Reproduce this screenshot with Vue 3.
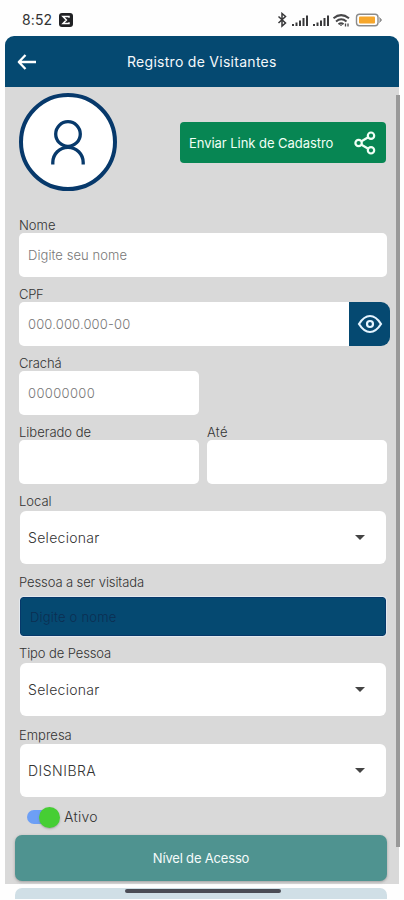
<script setup>
import { ref } from 'vue'

const active = ref(true)
</script>

<template>
  <div class="screen">
    <div class="status">
      <span class="time">8:52</span>
      <svg class="app-badge" width="14" height="14" viewBox="0 0 14 14">
        <rect width="14" height="14" rx="3" fill="#202124" />
        <path d="M10 4.8V3.5H4l3.4 3.4L4 10.5h6V9.2" fill="none" stroke="#fff" stroke-width="1.5" />
      </svg>
      <svg class="status-icons" width="108" height="16" viewBox="0 0 108 16">
        <path d="M1.500 4.500l7 6.500L5 14V1.500L8.500 4.500l-7 6.500" fill="none" stroke="#38383a" stroke-width="1.500" />
        <g stroke="#38383a" stroke-width="2">
          <path d="M16 14v-2M19.500 14v-3.500M23 14V8.500M26.500 14V6M30 14V3.500" />
          <path d="M37 14v-2M40.500 14v-3.500M44 14V8.500M47.500 14V6M51 14V3.500" />
        </g>
        <g fill="none" stroke="#48484a" stroke-width="2">
          <path d="M56.500 6.200q7.500-6.200 15.500 0M59 9.400q5.200-4.400 10.500 0M61.500 12.200q2.700-2 5 0" />
          <path d="M64 12.500v1.500M68.500 11.500v3M71 11.500v3" stroke-width="1.300" />
        </g>
        <rect x="79.500" y="2.300" width="21.500" height="11.400" rx="3" fill="#fff" stroke="#8b8b8b" stroke-width="1.400" />
        <rect x="82" y="4.500" width="16" height="7" rx="1" fill="#f6a62b" />
        <path d="M102.500 5.500l2 2.500-2 2.500" fill="#8b8b8b" stroke="#8b8b8b" />
      </svg>
    </div>

    <header class="header">
      <svg class="back" width="20" height="18" viewBox="0 0 20 18">
        <path d="M8.500 2L1.800 9l6.700 7M2 9h17" fill="none" stroke="#fff" stroke-width="2.300" stroke-linejoin="round" />
      </svg>
      <h1>Registro de Visitantes</h1>
    </header>

    <main class="content">
      <div class="top">
        <div class="avatar">
          <svg width="36" height="50" viewBox="0 0 36 50" fill="none" stroke="#07396b" stroke-width="3.300">
            <circle cx="18" cy="17" r="12.300" />
            <path d="M2.800 47.500v-2a15.200 15.200 0 0 1 30.400 0v2" />
          </svg>
        </div>
        <button class="share">
          <span>Enviar Link de Cadastro</span>
          <svg width="24" height="24" viewBox="0 0 24 24" fill="none" stroke="#f0fff5" stroke-width="2.200">
            <path d="M8.500 10.300l6.300-3.800M8.500 13.700l6.300 3.800" />
            <circle cx="5.600" cy="12" r="3.200" />
            <circle cx="18" cy="4.700" r="3.200" />
            <circle cx="18" cy="19.300" r="3.200" />
          </svg>
        </button>
      </div>

      <div class="field">
        <label>Nome</label>
        <div class="input"><span class="p-name">Digite seu nome</span></div>
      </div>
      <div class="field">
        <label class="l-cpf">CPF</label>
        <div class="cpf-row">
          <div class="input"><span class="p-cpf">000.000.000-00</span></div>
          <button class="eye">
            <svg width="26" height="20" viewBox="0 0 26 20" fill="none" stroke="#e4f4ff" stroke-width="2.200">
              <path d="M2 10Q7 2 13 2t11 8q-5 8-11 8T2 10z" />
              <circle cx="13" cy="10" r="3" />
            </svg>
          </button>
        </div>
      </div>
      <div class="field half">
        <label class="l-badge">Crachá</label>
        <div class="input"><span class="p-badge">00000000</span></div>
      </div>
      <div class="dates">
        <div class="field">
          <label>Liberado de</label>
          <div class="input"></div>
        </div>
        <div class="field">
          <label class="l-until">Até</label>
          <div class="input"></div>
        </div>
      </div>
      <div class="field local">
        <label>Local</label>
        <div class="select"><span>Selecionar</span><i class="caret"></i></div>
      </div>
      <div class="field visited">
        <label>Pessoa a ser visitada</label>
        <div class="search"><span>Digite o nome</span></div>
      </div>
      <div class="field kind">
        <label>Tipo de Pessoa</label>
        <div class="select"><span>Selecionar</span><i class="caret"></i></div>
      </div>
      <div class="field company">
        <label>Empresa</label>
        <div class="select"><span>DISNIBRA</span><i class="caret"></i></div>
      </div>
      <div class="toggle-row" @click="active = !active">
        <span class="toggle" :class="{ on: active }"><i></i></span>
        <span class="toggle-label">Ativo</span>
      </div>
      <button class="access"><span>Nível de Acesso</span></button>
      <div class="scrollbar"></div>
    </main>

    <footer class="bottom">
      <div class="peek"><div class="gesture"></div></div>
    </footer>
  </div>
</template>

<style>
body {
  margin: 0;
  background: #fefefe;
}
</style>

<style scoped>
* {
  box-sizing: border-box;
}
.screen {
  width: 404px;
  height: 900px;
  overflow: hidden;
  display: flex;
  flex-direction: column;
  background: #fefefe;
  font-family: Inter, "Noto Sans", sans-serif;
  font-weight: 300;
  color: #333;
  white-space: nowrap;
}
button {
  border: 0;
  padding: 0;
  font: inherit;
}
.status {
  height: 36px;
  flex: none;
  display: flex;
  align-items: center;
  padding: 3px 19px 0 22px;
}
.time {
  width: 37px;
  font-size: 14px;
  font-weight: 400;
  letter-spacing: 0.1px;
}
.status-icons {
  margin-left: auto;
  margin-right: 0;
}
.header {
  height: 51px;
  flex: none;
  margin: 0 5px;
  padding: 0 12px;
  display: flex;
  align-items: center;
  background: #054971;
  border-radius: 9px 9px 0 0;
}
h1 {
  margin: 0 0 0 90px;
  font-size: 14px;
  font-weight: 400;
  letter-spacing: 0.28px;
  color: #f4f8fb;
}
.content {
  position: relative;
  height: 797px;
  flex: none;
  margin: 0 5px;
  padding: 6px 13px 0 14px;
  background: #d9d9d9;
}
.top {
  height: 124px;
  width: 367px;
  display: flex;
  justify-content: space-between;
}
.avatar {
  width: 98px;
  height: 98px;
  border: 4px solid #07396b;
  border-radius: 50%;
  background: #fff;
  display: flex;
  justify-content: center;
  padding-top: 20px;
}
.share {
  width: 206px;
  height: 41px;
  margin: 29px 0 0;
  padding: 0 9px;
  display: flex;
  align-items: center;
  justify-content: space-between;
  border-radius: 4px;
  background: #078653;
  color: #f0fff5;
  font-size: 13px;
  font-weight: 400;
  letter-spacing: -0.05px;
}
.field {
  width: 368px;
  height: 69px;
}
.field label {
  display: block;
  height: 16px;
  line-height: 16px;
  font-size: 13px;
}
.field .l-cpf {
  letter-spacing: -0.3px;
}
.field .l-badge {
  letter-spacing: -0.15px;
}
.field .l-until {
  letter-spacing: 0.3px;
}
.input {
  height: 44px;
  border-radius: 5px;
  background: #fff;
  padding-left: 9px;
  display: flex;
  align-items: center;
  font-size: 13px;
  color: #777;
}
.p-name {
  letter-spacing: 0.07px;
}
.p-cpf {
  letter-spacing: 0.15px;
}
.p-badge {
  letter-spacing: 0.35px;
}
.half {
  width: 180px;
}
.cpf-row {
  width: 371px;
  display: flex;
}
.cpf-row .input {
  flex: 1;
  border-radius: 5px 0 0 5px;
}
.eye {
  width: 41px;
  height: 44px;
  background: #054971;
  border-radius: 0 9px 9px 0;
  display: flex;
  align-items: center;
  justify-content: center;
}
.dates {
  width: 368px;
  display: grid;
  grid-template-columns: 180px 180px;
  gap: 8px;
}
.dates .field {
  width: 180px;
}
.local {
  height: 81px;
}
.visited {
  height: 71px;
}
.visited label,
.kind label {
  letter-spacing: -0.1px;
}
.kind {
  height: 82px;
}
.company {
  height: 78px;
}
.select {
  width: 366px;
  height: 53px;
  margin: 2px 0 0 1px;
  padding: 0 21px 0 8px;
  display: flex;
  align-items: center;
  justify-content: space-between;
  border-radius: 6px;
  background: #fff;
  font-size: 14px;
  letter-spacing: 0.3px;
}
.company .select {
  margin-top: 1px;
  letter-spacing: 0.5px;
}
.caret {
  border: 5px solid transparent;
  border-top-color: #444;
  border-bottom: 0;
}
.search {
  width: 366px;
  height: 39px;
  margin: 7px 0 0 1px;
  padding-left: 9px;
  display: flex;
  align-items: center;
  background: #054971;
  border: 1px solid #07386a;
  border-radius: 3px;
  outline: 1px solid #e3e9ee;
  font-size: 13px;
  letter-spacing: 0.2px;
  color: #0c2e52;
}
.toggle-row {
  height: 30px;
  padding: 1px 0 0 8px;
  display: flex;
  align-items: flex-start;
}
.toggle {
  width: 33px;
  height: 22px;
  display: flex;
  align-items: center;
}
.toggle::before {
  content: "";
  width: 24px;
  height: 14px;
  border-radius: 7px;
  background: #999;
}
.toggle.on::before {
  background: #6d9ff5;
}
.toggle i {
  width: 21px;
  height: 21px;
  margin-left: -24px;
  border-radius: 50%;
  background: #eee;
}
.toggle.on i {
  margin-left: -12px;
  background: #46ce34;
  box-shadow: 0 1px 2px #7778;
}
.toggle-label {
  margin-left: 4px;
  line-height: 22px;
  font-size: 14px;
  letter-spacing: 0.25px;
}
.access {
  display: block;
  width: 372px;
  height: 46px;
  margin-left: -4px;
  border-radius: 7px;
  background: #4f9390;
  box-shadow: 0 1px 3px #7779;
  color: #f5fbfb;
  font-size: 13px;
  font-weight: 400;
  letter-spacing: -0.18px;
}
.scrollbar {
  position: absolute;
  top: 8px;
  right: -1px;
  width: 4px;
  height: 752px;
  background: #999;
}
.bottom {
  flex: 1;
  padding: 4px 17px 0 15px;
}
.peek {
  height: 11px;
  padding-top: 1px;
  background: #d0dfe6;
  border-radius: 7px 7px 0 0;
}
.gesture {
  width: 156px;
  height: 4px;
  margin-left: 110px;
  border-radius: 2px;
  background: #4b4c55;
}
</style>
